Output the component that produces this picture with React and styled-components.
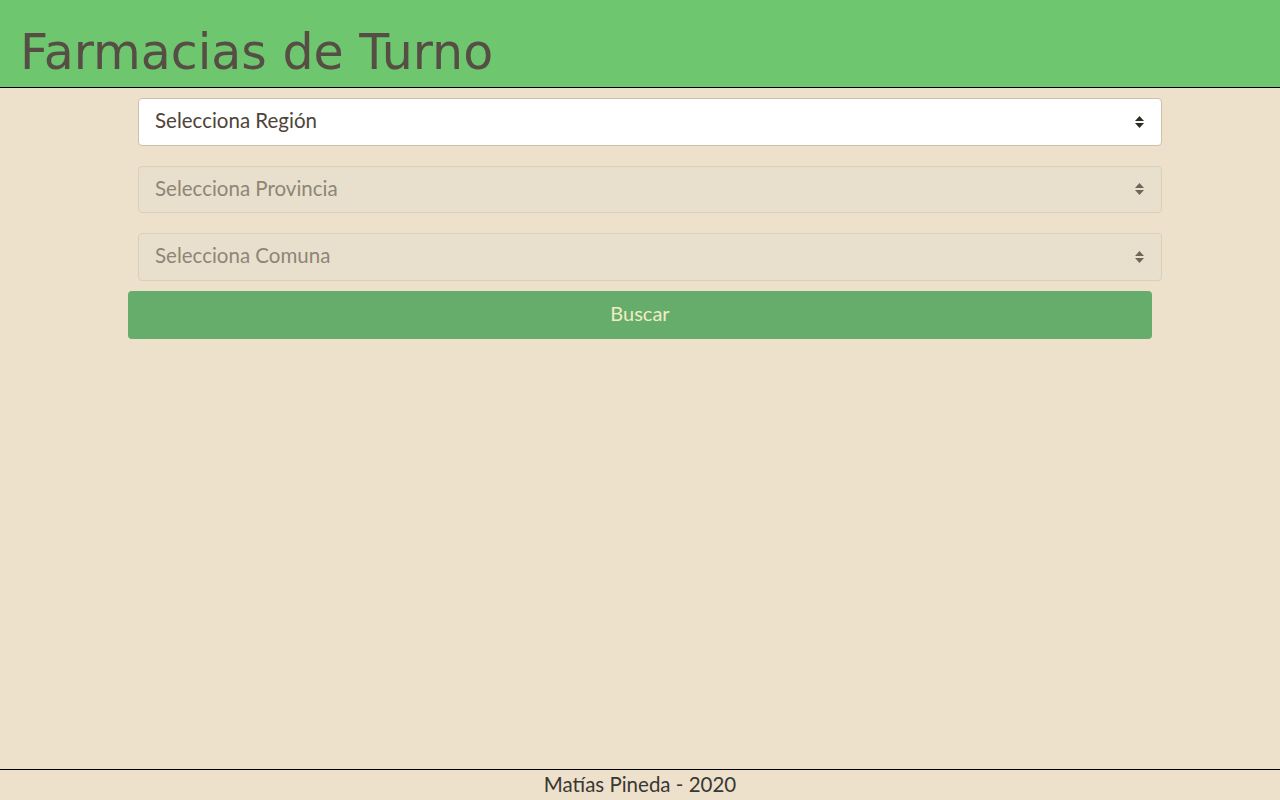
import React from "react";
import styled, { createGlobalStyle } from "styled-components";

const Global = createGlobalStyle`
  html, body { margin: 0; padding: 0; background: #ede1cb; }
  body { font-family: Lato, "Noto Sans", sans-serif; }
  * { box-sizing: border-box; }
`;

const Page = styled.div`
  min-height: 800px;
  display: flex;
  flex-direction: column;
  background: #ede1cb;
`;

const Header = styled.header`
  height: 88px;
  background: #6ec66f;
  border-bottom: 1px solid #000;
  padding: 23px 0 0 20px;
`;

const Title = styled.h1`
  margin: 0;
  font-family: "DejaVu Sans", Verdana, sans-serif;
  font-weight: normal;
  font-size: 49px;
  line-height: 60px;
  color: #564d45;
`;

const Main = styled.main`
  flex: 1;
  width: 1024px;
  margin: 0 auto;
  padding-top: 10px;
  display: flex;
  flex-direction: column;
  align-items: flex-start;
`;

const SelectBox = styled.div`
  width: 1024px;
  height: 47.5px;
  margin: 0 0 20px 10px;
  display: flex;
  align-items: center;
  padding: 0 16px 3px 16px;
  border: 1px solid ${p => (p.disabled ? "#d9cfbb" : "#cdc0a8")};
  border-radius: 4px;
  background: ${p => (p.disabled ? "#e8e0cd" : "#ffffff")};
  color: ${p => (p.disabled ? "#8f8576" : "#4e4439")};
  font-size: 20.5px;
  &:last-of-type { margin-bottom: 10px; }
`;

const Label = styled.span`
  flex: 1;
`;

const ArrowIcon = styled.svg`
  margin-top: 3px;
`;

const Arrows = ({ color }) => (
  <ArrowIcon width="11" height="14" viewBox="0 0 11 14">
    <path d="M5.5 1 L10 6 L1 6 Z" fill={color} />
    <path d="M5.5 13 L10 8 L1 8 Z" fill={color} />
  </ArrowIcon>
);

const Button = styled.button`
  width: 1024px;
  height: 48px;
  border: none;
  border-radius: 4px;
  background: #66ac6a;
  color: #f1ecc8;
  font-family: Lato, "Noto Sans", sans-serif;
  font-size: 20px;
  padding: 0 0 3px 0;
  cursor: pointer;
`;

const Footer = styled.footer`
  border-top: 1px solid #000;
  height: 31px;
  display: flex;
  align-items: center;
  justify-content: center;
  font-size: 20.5px;
  padding-bottom: 2px;
  color: #3a3733;
`;

export default function App() {
  return (
    <Page>
      <Global />
      <Header>
        <Title>Farmacias de Turno</Title>
      </Header>
      <Main>
        <SelectBox>
          <Label>Selecciona Región</Label>
          <Arrows color="#2e2a26" />
        </SelectBox>
        <SelectBox disabled>
          <Label>Selecciona Provincia</Label>
          <Arrows color="#6f665b" />
        </SelectBox>
        <SelectBox disabled>
          <Label>Selecciona Comuna</Label>
          <Arrows color="#6f665b" />
        </SelectBox>
        <Button>Buscar</Button>
      </Main>
      <Footer>Matías Pineda - 2020</Footer>
    </Page>
  );
}
